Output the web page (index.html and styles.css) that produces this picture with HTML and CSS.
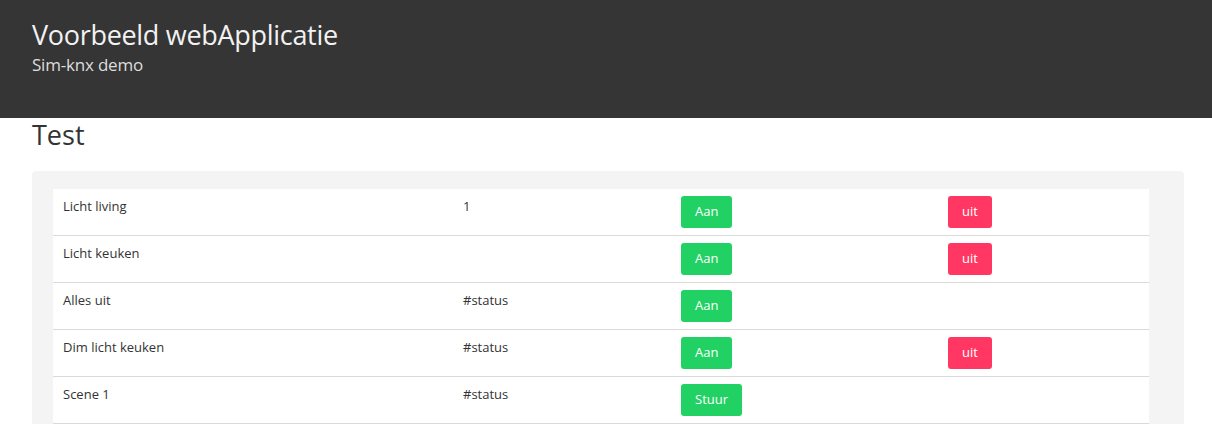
FILE: index.html
```html
<!DOCTYPE html>
<html lang="nl">
<head>
<meta charset="utf-8">
<title>Voorbeeld webApplicatie</title>
<link rel="stylesheet" href="styles.css">
</head>
<body>
<header class="topbar">
  <h1 class="title">Voorbeeld webApplicatie</h1>
  <p class="subtitle">Sim-knx demo</p>
</header>
<main class="content">
  <h2 class="section-title">Test</h2>
  <div class="panel">
    <table class="devices">
      <tr>
        <td class="c-name">Licht living</td>
        <td class="c-status">1</td>
        <td class="c-on"><button class="btn btn-on">Aan</button></td>
        <td class="c-off"><button class="btn btn-off">uit</button></td>
      </tr>
      <tr>
        <td class="c-name">Licht keuken</td>
        <td class="c-status"></td>
        <td class="c-on"><button class="btn btn-on">Aan</button></td>
        <td class="c-off"><button class="btn btn-off">uit</button></td>
      </tr>
      <tr>
        <td class="c-name">Alles uit</td>
        <td class="c-status">#status</td>
        <td class="c-on"><button class="btn btn-on">Aan</button></td>
        <td class="c-off"></td>
      </tr>
      <tr>
        <td class="c-name">Dim licht keuken</td>
        <td class="c-status">#status</td>
        <td class="c-on"><button class="btn btn-on">Aan</button></td>
        <td class="c-off"><button class="btn btn-off">uit</button></td>
      </tr>
      <tr>
        <td class="c-name">Scene 1</td>
        <td class="c-status">#status</td>
        <td class="c-on"><button class="btn btn-on">Stuur</button></td>
        <td class="c-off"></td>
      </tr>
    </table>
  </div>
</main>
</body>
</html>
```
FILE: styles.css
```css
html, body {
  margin: 0;
  padding: 0;
  background: #ffffff;
  font-family: "Open Sans", "Noto Sans", sans-serif;
  color: #333333;
}

.topbar {
  background: #353535;
  color: #f2f2f2;
  height: 118px;
  box-sizing: border-box;
  padding: 16px 32px 0;
}

.title {
  margin: 0;
  font-size: 27px;
  font-weight: 400;
  line-height: 38px;
  letter-spacing: -0.3px;
}

.subtitle {
  margin: 0;
  font-size: 17px;
  line-height: 22px;
  color: #dddddd;
  letter-spacing: -0.2px;
}

.content {
  padding: 0 28px 0 32px;
}

.section-title {
  margin: 0;
  font-size: 27px;
  font-weight: 400;
  line-height: 34px;
  color: #333333;
}

.panel {
  margin-top: 19px;
  background: #f4f4f4;
  border-radius: 4px 4px 0 0;
  padding: 18px 35px 0 21px;
}

.devices {
  width: 100%;
  border-collapse: collapse;
  background: #ffffff;
  font-size: 13px;
}

.devices td {
  border-bottom: 1px solid #dadada;
  padding: 7px 10px;
  height: 32px;
  vertical-align: top;
  line-height: 20px;
}

.devices .c-name { width: 380px; }
.devices .c-status { width: 198px; }
.devices .c-on { width: 247px; }

.btn {
  font-family: inherit;
  font-size: 13px;
  line-height: 20px;
  color: #ffffff;
  border: none;
  border-radius: 3px;
  padding: 5px 14px 7px;
  height: 32px;
  cursor: pointer;
}

.btn-on { background: #22d163; }
.btn-off { background: #ff3762; }
```
